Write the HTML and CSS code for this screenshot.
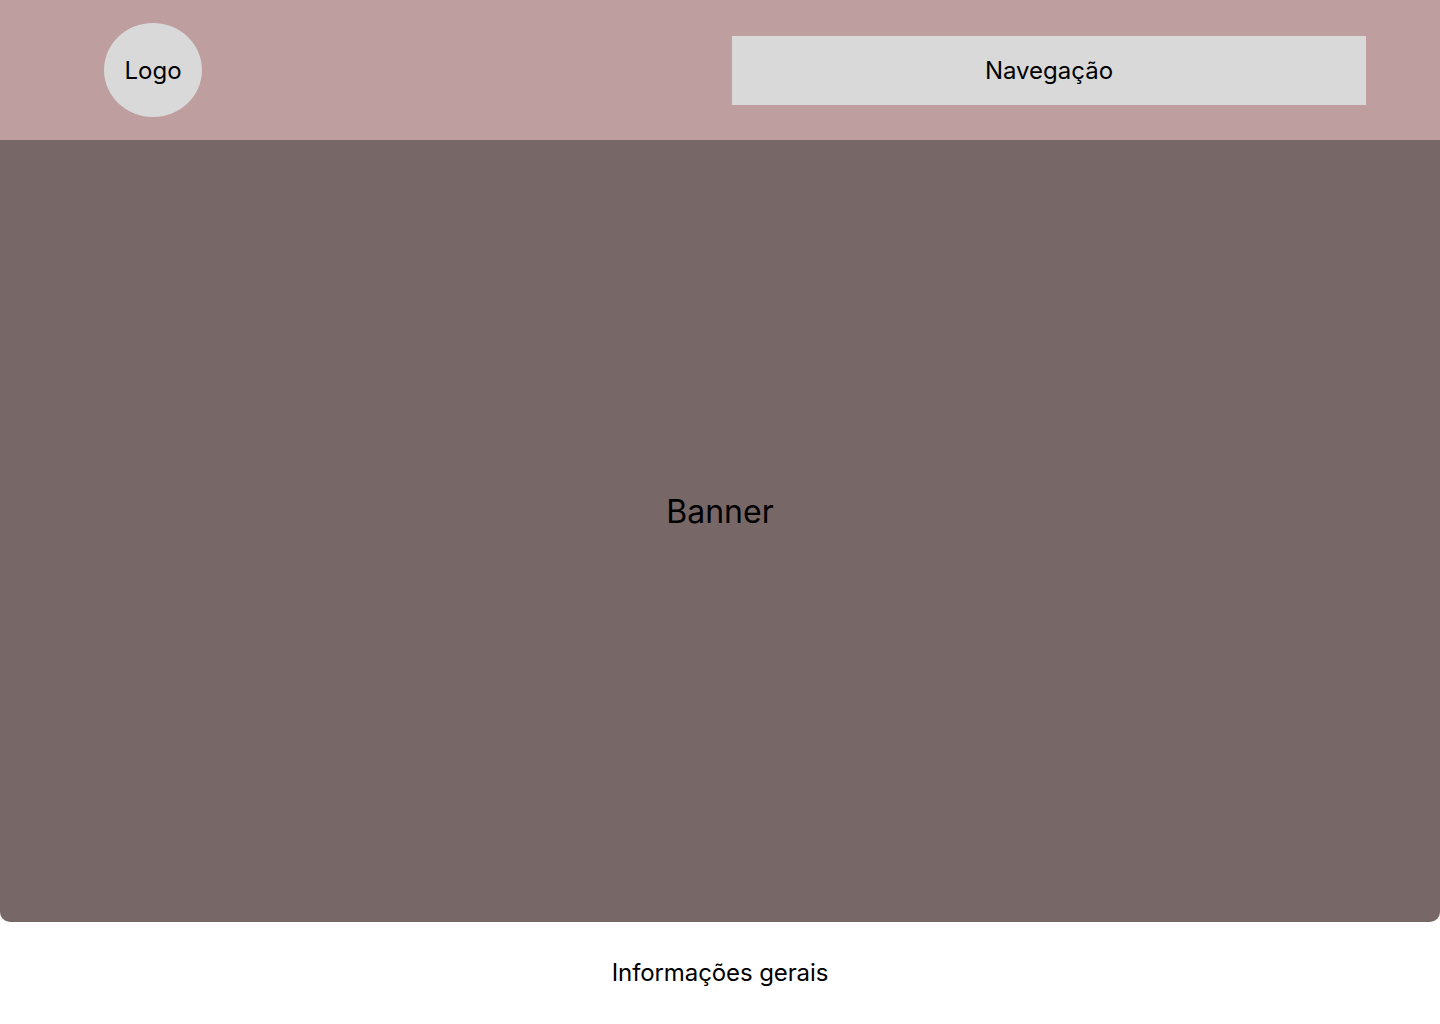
FILE: index.html
```html
<!DOCTYPE html>
<html lang="pt">
<head>
<meta charset="utf-8">
<title>Wireframe</title>
<link rel="stylesheet" href="styles.css">
</head>
<body>
<header class="header">
  <div class="logo">Logo</div>
  <nav class="nav">Navegação</nav>
</header>
<main class="banner">Banner</main>
<footer class="info">Informações gerais</footer>
</body>
</html>
```
FILE: styles.css
```css
* { box-sizing: border-box; }
html, body { margin: 0; padding: 0; }
body {
  font-family: Inter, "Noto Sans", sans-serif;
  color: #000;
  background: #fff;
  width: 1440px;
}
.header {
  height: 140px;
  background: #be9e9f;
  display: flex;
  align-items: center;
  justify-content: space-between;
  padding: 0 74px 0 104px;
}
.logo {
  width: 98px;
  height: 94px;
  border-radius: 50%;
  background: #d9d9d9;
  display: flex;
  align-items: center;
  justify-content: center;
  font-size: 24px;
}
.nav {
  width: 634px;
  height: 69px;
  background: #d9d9d9;
  display: flex;
  align-items: center;
  justify-content: center;
  font-size: 24px;
}
.banner {
  height: 782px;
  background: #786767;
  border-radius: 0 0 10px 10px;
  display: flex;
  align-items: center;
  justify-content: center;
  padding-bottom: 40px;
  font-size: 32px;
}
.info {
  height: 100px;
  display: flex;
  align-items: center;
  justify-content: center;
  font-size: 24px;
  letter-spacing: -0.1px;
}
```
